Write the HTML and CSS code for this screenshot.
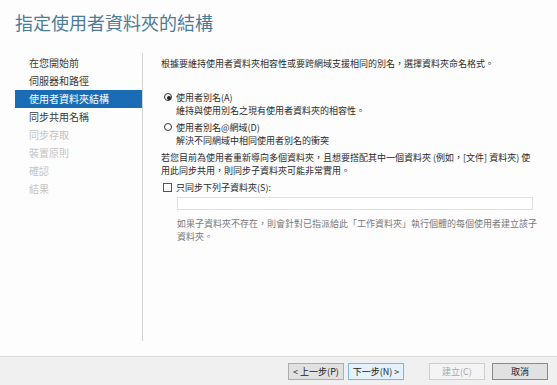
FILE: index.html
```html
<!DOCTYPE html>
<html lang="zh-Hant">
<head>
    <meta charset="UTF-8">
    <title>指定使用者資料夾的結構</title>
    <link rel="stylesheet" href="styles.css">
</head>
<body>
<div class="wizard">
    <!-- Title -->
    <div class="header">
        <h1>指定使用者資料夾的結構</h1>
    </div>

    <div class="main">
        <!-- Steps -->
        <div class="steps">
            <div class="step">在您開始前</div>
            <div class="step">伺服器和路徑</div>
            <div class="step selected">使用者資料夾結構</div>
            <div class="step">同步共用名稱</div>
            <div class="step disabled">同步存取</div>
            <div class="step disabled">裝置原則</div>
            <div class="step disabled">確認</div>
            <div class="step disabled">結果</div>
        </div>

        <!-- Page content -->
        <div class="content">
            <p class="intro">根據要維持使用者資料夾相容性或要跨網域支援相同的別名，選擇資料夾命名格式。</p>

            <label class="option first">
                <input type="radio" name="naming" checked>
                <span class="option-text">
                    <span>使用者別名(A)</span>
                    <span>維持與使用別名之現有使用者資料夾的相容性。</span>
                </span>
            </label>
            <label class="option">
                <input type="radio" name="naming">
                <span class="option-text">
                    <span>使用者別名@網域(D)</span>
                    <span>解決不同網域中相同使用者別名的衝突</span>
                </span>
            </label>

            <p class="info">若您目前為使用者重新導向多個資料夾，且想要搭配其中一個資料夾 (例如，[文件] 資料夾) 使用此同步共用，則同步子資料夾可能非常實用。</p>

            <label class="option check">
                <input type="checkbox">
                <span class="option-text">只同步下列子資料夾(S):</span>
            </label>
            <div class="subfolder">
                <input type="text" class="text-box" disabled>
                <p class="note">如果子資料夾不存在，則會針對已指派給此「工作資料夾」執行個體的每個使用者建立該子資料夾。</p>
            </div>
        </div>
    </div>

    <!-- Buttons -->
    <div class="footer">
        <button class="btn">&lt; 上一步(P)</button>
        <button class="btn focused">下一步(N) &gt;</button>
        <button class="btn create" disabled>建立(C)</button>
        <button class="btn cancel">取消</button>
    </div>
</div>
</body>
</html>
```

FILE: styles.css
```css
body {
    margin: 0;
    padding: 0;
    font-family: "Noto Sans CJK TC", "Noto Sans", sans-serif;
    background-color: #fdfdfd;
    color: #2b2b2b;
}

.wizard {
    width: 557px;
    height: 385px;
    display: flex;
    flex-direction: column;
    overflow: hidden;
}

/* Title */
.header {
    height: 53px;
    padding: 9px 0 0 15px;
    box-sizing: border-box;
}

h1 {
    margin: 0;
    font-size: 18px;
    line-height: 26px;
    font-weight: normal;
    color: #4c7b99;
}

.main {
    flex: 1;
    display: flex;
    margin-bottom: 15px;
}

/* Steps */
.steps {
    width: 143px;
    padding: 1px 0 0 15px;
    box-sizing: border-box;
    border-right: 1px solid #d4d4d4;
}

.step {
    height: 18px;
    line-height: 18px;
    padding-left: 14px;
    font-size: 10px;
    color: #3a3a3a;
}

.step.selected {
    background-color: #1a6db5;
    color: #fff;
}

.step.disabled {
    color: #c4c4c4;
}

/* Content */
.content {
    flex: 1;
    padding: 4px 0 0 18px;
    font-size: 9px;
    line-height: 13px;
}

p {
    margin: 0;
}

.intro {
    margin-bottom: 21px;
}

.option {
    display: flex;
    align-items: flex-start;
    margin: 4px 0 0 3px;
}

.option.first {
    margin-top: 0;
}

.option input {
    appearance: none;
    margin: 2px 4px 0 0;
    width: 8px;
    height: 8px;
    border: 1px solid #333;
    background: #fff;
    flex: none;
}

.option input[type="radio"] {
    border-radius: 50%;
    position: relative;
}

.option input[type="radio"]:checked::after {
    content: "";
    position: absolute;
    left: 2px;
    top: 2px;
    width: 4px;
    height: 4px;
    border-radius: 50%;
    background: #222;
}

.option.check {
    margin-left: 2px;
}

.option.check input {
    width: 9px;
    height: 9px;
    margin-top: 2px;
    border-color: #555;
}

.option-text {
    display: flex;
    flex-direction: column;
}

.info {
    margin-top: 4px;
    width: 378px;
}

.subfolder {
    padding-left: 16px;
}

.text-box {
    display: block;
    width: 356px;
    height: 13px;
    box-sizing: border-box;
    margin: 3px 0 0 0;
    border: 1px solid #e0e0e0;
    background: #fff;
}

.note {
    margin-top: 7px;
    width: 360px;
    color: #7a7a7a;
}

/* Buttons */
.footer {
    height: 29px;
    box-sizing: border-box;
    border-top: 1px solid #dcdcdc;
    background-color: #f0f0f0;
    display: flex;
    justify-content: flex-end;
    align-items: flex-start;
    padding: 6px 9px 0 0;
}

.btn {
    width: 56px;
    height: 17px;
    padding: 0;
    font-family: "Noto Sans CJK TC", "Noto Sans", sans-serif;
    font-size: 9px;
    color: #222;
    background-color: #e1e1e1;
    border: 1px solid #adadad;
    margin-left: 4px;
}

.btn.focused {
    background-color: #e5f1fb;
    border-color: #7eb4ea;
}

.btn.create {
    margin-left: 25px;
    background-color: #f4f4f4;
    border-color: #cfcfcf;
    color: #a8a8a8;
}

.btn.cancel {
    margin-left: 7px;
    border-color: #8a8a8a;
}
```
